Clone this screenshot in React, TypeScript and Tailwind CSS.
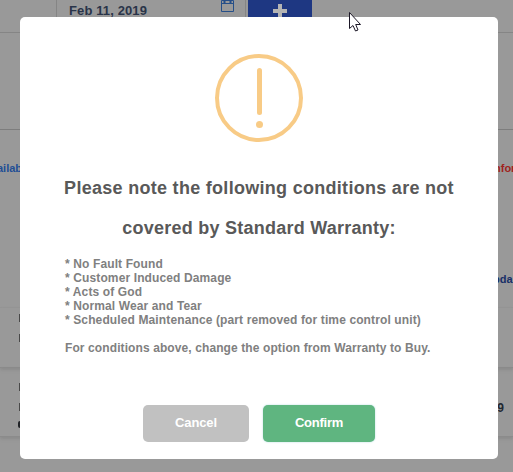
import type { ReactNode } from "react";

const conditions = [
  "No Fault Found",
  "Customer Induced Damage",
  "Acts of God",
  "Normal Wear and Tear",
  "Scheduled Maintenance (part removed for time control unit)",
];

function CalendarIcon() {
  return (
    <svg width="13" height="14" viewBox="0 0 13 14" fill="none" stroke="#264f88" className="block shrink-0">
      <path d="M.5 2.500h12v11H.5zM1 5.500h11" />
      <path d="M3.500 0v5M9.500 0v5" strokeWidth="2" />
    </svg>
  );
}

function PageRow({ children, className }: { children?: ReactNode; className: string }) {
  return <div className={`flex w-full justify-between ${className}`}>{children}</div>;
}

function Page() {
  return (
    <div className="flex h-full flex-col text-[11px] leading-[14px] font-bold">
      <div className="flex h-[33px] shrink-0 border-b border-[#858585]">
        <div className="w-14 shrink-0" />
        <div className="flex w-[190px] shrink-0 justify-between border-x border-[#858585] pr-[11px] pl-3">
          <span className="mt-[3px] text-[13px] leading-[16px] tracking-[0.12px] text-[#293449]">Feb 11, 2019</span>
          <div className="-mt-0.5"><CalendarIcon /></div>
        </div>
        <div className="ml-0.5 flex w-16 shrink-0 justify-center bg-[#1e3782] pt-1">
          <svg width="14" height="14" viewBox="0 0 14 14" className="block">
            <path d="M7 0v14M0 7h14" stroke="#b4b4b4" strokeWidth="4" />
          </svg>
        </div>
      </div>
      <PageRow className="h-[97px] shrink-0 border-b border-[#7d7d7d]" />
      <PageRow className="h-[178px] shrink-0 border-b border-[#959595]">
        <span className="mt-[31px] -ml-[3px] text-[#214e95]">ailab</span>
        <div className="flex w-[18px] flex-col whitespace-nowrap">
          <span className="mt-[31px] -ml-px text-[#a02220]">nfor</span>
          <span className="mt-[97px] -ml-[2px] text-[#172f67]">pda</span>
        </div>
      </PageRow>
      <PageRow className="h-[60px] shrink-0 border-b border-[#8b8b8b] shadow-[0_2px_3px_#8b8b8b]">
        <div className="ml-[19px] flex flex-col pt-[6px]">
          <span className="h-2 w-px bg-[#484848]" />
          <span className="mt-3 h-2 w-px bg-[#484848]" />
        </div>
      </PageRow>
      <PageRow className="h-[69px] shrink-0 border-b border-[#8b8b8b] shadow-[0_2px_3px_#8b8b8b]">
        <div className="ml-[19px] flex flex-col pt-[15px]">
          <span className="h-2 w-px bg-[#484848]" />
          <span className="mt-3 h-2 w-px bg-[#484848]" />
          <span className="mt-[10px] -ml-px h-[7px] w-1 rounded-full bg-[#202226]" />
        </div>
        <span className="mt-[33px] mr-[9px] text-[12px] text-[#222831]">9</span>
      </PageRow>
    </div>
  );
}

function WarningIcon() {
  return (
    <div className="flex size-[88px] flex-col items-center rounded-full border-4 border-[#f8cb86] pt-[10px]">
      <span className="h-[47px] w-[5px] rounded-sm bg-[#f8cb86]" />
      <span className="mt-1.5 size-[7px] shrink-0 rounded-full bg-[#f8cb86]" />
    </div>
  );
}

function Dialog() {
  return (
    <div role="dialog" className="absolute top-[17px] left-5 flex h-[442px] w-[478px] flex-col items-center rounded-[5px] bg-white pt-[37px]">
      <WarningIcon />
      <h2 className="mt-[26px] text-center text-[18px] leading-10 font-bold tracking-[0.29px] whitespace-nowrap text-[#595959]">
        Please note the following conditions are not<br /><span className="tracking-[0.24px]">covered by Standard Warranty:</span>
      </h2>
      <div className="mt-[9px] w-full pl-[45px] text-[12px] leading-[14px] font-bold tracking-[0.12px] whitespace-nowrap text-[#808080]">
        {conditions.map((condition) => <p key={condition}>* {condition}</p>)}
        <p className="mt-3.5 tracking-[0.1px]">For conditions above, change the option from Warranty to Buy.</p>
      </div>
      <div className="mt-[50px] flex gap-3.5 text-[13px] font-bold tracking-[-0.1px] text-white">
        <button className="h-[37px] w-[106px] rounded-[5px] bg-[#c1c1c1] pb-0.5">Cancel</button>
        <button className="h-[37px] w-28 rounded-[5px] bg-[#5fb580] pb-0.5 tracking-[-0.25px] shadow-[0_0_2px_#afd9dd]">Confirm</button>
      </div>
    </div>
  );
}

export default function App() {
  return (
    <main className="relative h-[472px] w-[513px] overflow-hidden bg-[#999999] font-['Liberation_Sans',sans-serif]">
      <Page />
      <Dialog />
      <svg width="13" height="20" viewBox="0 0 13 20" className="absolute top-3 left-[349px]">
        <path d="M.5.5v16l3.500-3 2.500 5.500 2.500-1-2.300-5.500h4.800z" fill="#fff" stroke="#1b1726" />
      </svg>
    </main>
  );
}
